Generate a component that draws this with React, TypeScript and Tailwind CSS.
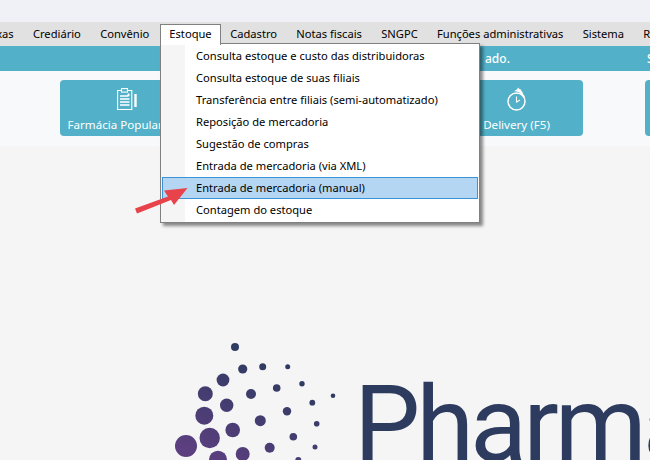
const dots: [number, number, number][] = [
  [235, 347, 4], [242.7, 369, 4.6], [262.7, 366.7, 3.5], [287.7, 366.7, 2.5], [223, 380, 6.4], [302, 383.7, 2.7],
  [276.7, 388, 3.8], [251, 394, 5], [205.3, 393.7, 7.5], [333, 395.7, 2.3], [312.3, 402.7, 2.9], [226.7, 405.3, 6.7],
  [287, 411.3, 4.2], [204.3, 415.7, 9], [260.3, 420.7, 5.5], [316.7, 423.7, 2.8], [232.7, 430, 7.3], [293.3, 436.7, 3.8],
  [209.7, 438, 10.2], [186, 446, 11], [269.7, 447.7, 5], [315, 447, 2.5], [242.7, 454, 7], [218, 459.7, 9], [298.3, 460, 3],
];
const menus = ["Caixas", "Crediário", "Convênio", "Estoque", "Cadastro", "Notas fiscais", "SNGPC", "Funções administrativas", "Sistema", "Relatórios"];
const items = [
  "Consulta estoque e custo das distribuidoras",
  "Consulta estoque de suas filiais",
  "Transferência entre filiais (semi-automatizado)",
  "Reposição de mercadoria",
  "Sugestão de compras",
  "Entrada de mercadoria (via XML)",
  "Entrada de mercadoria (manual)",
  "Contagem do estoque",
];
function Clip() {
  return (
    <svg width="20" height="22" viewBox="0 0 20 22" fill="none" stroke="#fff" strokeWidth="1.1">
      <path d="M5 2.5H.6v19h14.2V2.5H10.500" />
      <rect x="4.500" y=".6" width="6" height="3.500" />
      <path d="M3 8h8M3 11h9.500M3 14h9.500M3 17h9.500" strokeWidth="1.300" />
      <path d="M11.500 5.500v3M10 7h3" />
      <path d="M18.500 6v13" strokeWidth="2.400" />
    </svg>
  );
}
function Watch() {
  return (
    <svg width="20" height="24" viewBox="0 0 20 24" fill="none" stroke="#fff" strokeWidth="1.5">
      <circle cx="9.500" cy="14.500" r="8.500" />
      <path d="M9.500 9.500v5.500l3.500-2" strokeWidth="1.100" />
      <path d="M7 4.500c1-1.500 3-1 4-4 1.500 1 1 2 3 2 0 2 2 2 2 4.500 1 1 2 2 2 4l-4-4c-2-2-4.500-3-7-2.500z" fill="#fff" stroke="none" />
    </svg>
  );
}
function Btn({ label, icon }: { label: string; icon?: React.ReactNode }) {
  return (
    <div className="flex h-[56px] w-[133px] shrink-0 flex-col items-center rounded-[4px] bg-[#52b0c8] pt-[7px] text-[11.6px] text-white">
      <div className="flex h-[24px] items-center">{icon}</div>
      <span className="mt-[5px] whitespace-nowrap">{label}</span>
    </div>
  );
}
export default function App() {
  return (
    <div className="relative h-[460px] w-[650px] overflow-hidden bg-[#f5f5f5] text-[11.15px] text-black [font-family:'Noto_Sans',sans-serif]">
      <div className="h-[22px] bg-[#f0f1f6]" />
      <div className="flex h-[24px] items-center overflow-hidden bg-[#e1e1e1]">
        <div className="ml-[-20px] flex items-center gap-[19.3px] whitespace-nowrap">
          {menus.map((m) => (
            <span key={m} className={m === "Estoque" ? "invisible" : ""}>{m}</span>
          ))}
        </div>
      </div>
      <div className="flex h-[25px] items-center overflow-hidden whitespace-nowrap bg-[#52b0c8] pl-[485px] text-[12px] font-medium text-white">
        <span>ado.</span>
        <span className="ml-[137px]">S</span>
      </div>
      <div className="flex h-[75px] gap-[62px] bg-[#f8f9fb] pl-[60px] pt-[9px]">
        <Btn label="Farmácia Popular (F4)" icon={<Clip />} />
        <Btn label="" />
        <Btn label="Delivery (F5)" icon={<Watch />} />
        <Btn label="" />
      </div>
      <div className="flex items-start pl-[174px]">
        <svg className="shrink-0" width="165" height="314" viewBox="174 146 165 314">
          <defs>
            <linearGradient id="g" gradientUnits="userSpaceOnUse" x1="260" y1="345" x2="200" y2="460">
              <stop offset="0" stopColor="#2a3b5f" />
              <stop offset="1" stopColor="#5d3f80" />
            </linearGradient>
          </defs>
          {dots.map(([x, y, r], i) => (
            <circle key={i} cx={x} cy={y} r={r} fill="url(#g)" />
          ))}
        </svg>
        <span className="ml-[15px] mt-[227px] text-[105px] leading-none tracking-[-4px] text-[#2d3b5e] [font-family:'Roboto',sans-serif]">Pharma</span>
      </div>

      <div className="absolute left-[160px] top-[24px] z-20 flex h-[21px] w-[61px] items-center justify-center border border-b-0 border-[#808080] bg-white pb-[1px]">Estoque</div>
      <div className="absolute left-[160px] top-[43px] z-10 w-[320px] border border-[#808080] bg-white py-[1px] shadow-[3px_3px_3px_rgba(0,0,0,0.45)]">
        <div className="absolute bottom-0 left-0 top-0 w-[24px] bg-[#f5f5f5]" />
        {items.map((t) => (
          <div key={t} className={"relative flex h-[22px] items-center whitespace-nowrap border " + (t.endsWith("(manual)") ? "mx-[1px] border-[#3a93d6] bg-[#b5d6f3] pl-[33px]" : "border-transparent pl-[34px]")}>{t}</div>
        ))}
      </div>
      <svg className="absolute left-[130px] top-[180px] z-30" width="65" height="40" viewBox="130 180 65 40">
        <path d="M135 208.500L168 196.500L164 190.500L187.500 188L174 205L171 200L137 213.500Z" fill="#e8434b" />
      </svg>
    </div>
  );
}
